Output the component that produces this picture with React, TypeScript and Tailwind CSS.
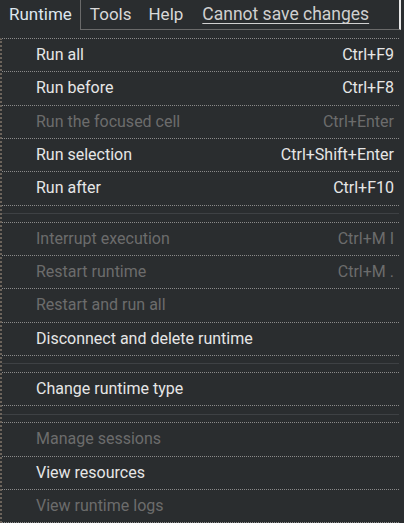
type Item = { label: string; shortcut?: string; disabled?: boolean } | 'sep';

const items: Item[] = [
  { label: 'Run all', shortcut: 'Ctrl+F9' },
  { label: 'Run before', shortcut: 'Ctrl+F8' },
  { label: 'Run the focused cell', shortcut: 'Ctrl+Enter', disabled: true },
  { label: 'Run selection', shortcut: 'Ctrl+Shift+Enter' },
  { label: 'Run after', shortcut: 'Ctrl+F10' },
  'sep',
  { label: 'Interrupt execution', shortcut: 'Ctrl+M I', disabled: true },
  { label: 'Restart runtime', shortcut: 'Ctrl+M .', disabled: true },
  { label: 'Restart and run all', disabled: true },
  { label: 'Disconnect and delete runtime' },
  'sep',
  { label: 'Change runtime type' },
  'sep',
  { label: 'Manage sessions', disabled: true },
  { label: 'View resources' },
  { label: 'View runtime logs', disabled: true },
];

const App = () => {
  return (
    <div
      className="w-[404px] h-[523px] overflow-hidden bg-[#2a2d2f] text-[#e3e3e3]"
      style={{ fontFamily: 'Roboto, "Liberation Sans", sans-serif' }}
    >
      {/* menubar */}
      <div className="flex h-[30px] items-stretch">
        <div className="flex items-center pl-[9px] pr-[8px] text-[17px] text-[#dde6ee]">Runtime</div>
        <div className="flex flex-1 items-center gap-[17px] border-l border-b border-[#6a6a6a] pl-[9px] text-[17px] text-[#d9d9d9] mr-[3px] border-r-2 border-r-[#e8e8e8]">
          <span>Tools</span>
          <span>Help</span>
          <span className="ml-[2px] text-[17.5px] underline underline-offset-[3px] text-[#d0d0d0]">Cannot save changes</span>
        </div>
      </div>

      {/* dropdown */}
      <div className="mt-[8px] w-[399px] border-l-2 border-[#6b635b] border-t border-t-[#8a8a8a] border-dotted">
        {items.map((it, i) =>
          it === 'sep' ? (
            <div key={i} className="flex h-[17px] flex-col justify-center border-b border-dotted border-[#8a8a8a]">
              <div className="h-px bg-[#3e4144]" />
            </div>
          ) : (
            <div
              key={i}
              className={`flex h-[33.33px] items-center justify-between border-b border-dotted border-[#8a8a8a] pl-[34px] pr-[5px] text-[16px] ${
                it.disabled ? 'text-[#6c6c6c]' : 'text-[#e6e6e6]'
              }`}
            >
              <span>{it.label}</span>
              {it.shortcut && <span>{it.shortcut}</span>}
            </div>
          )
        )}
      </div>
    </div>
  );
};

export default App;
